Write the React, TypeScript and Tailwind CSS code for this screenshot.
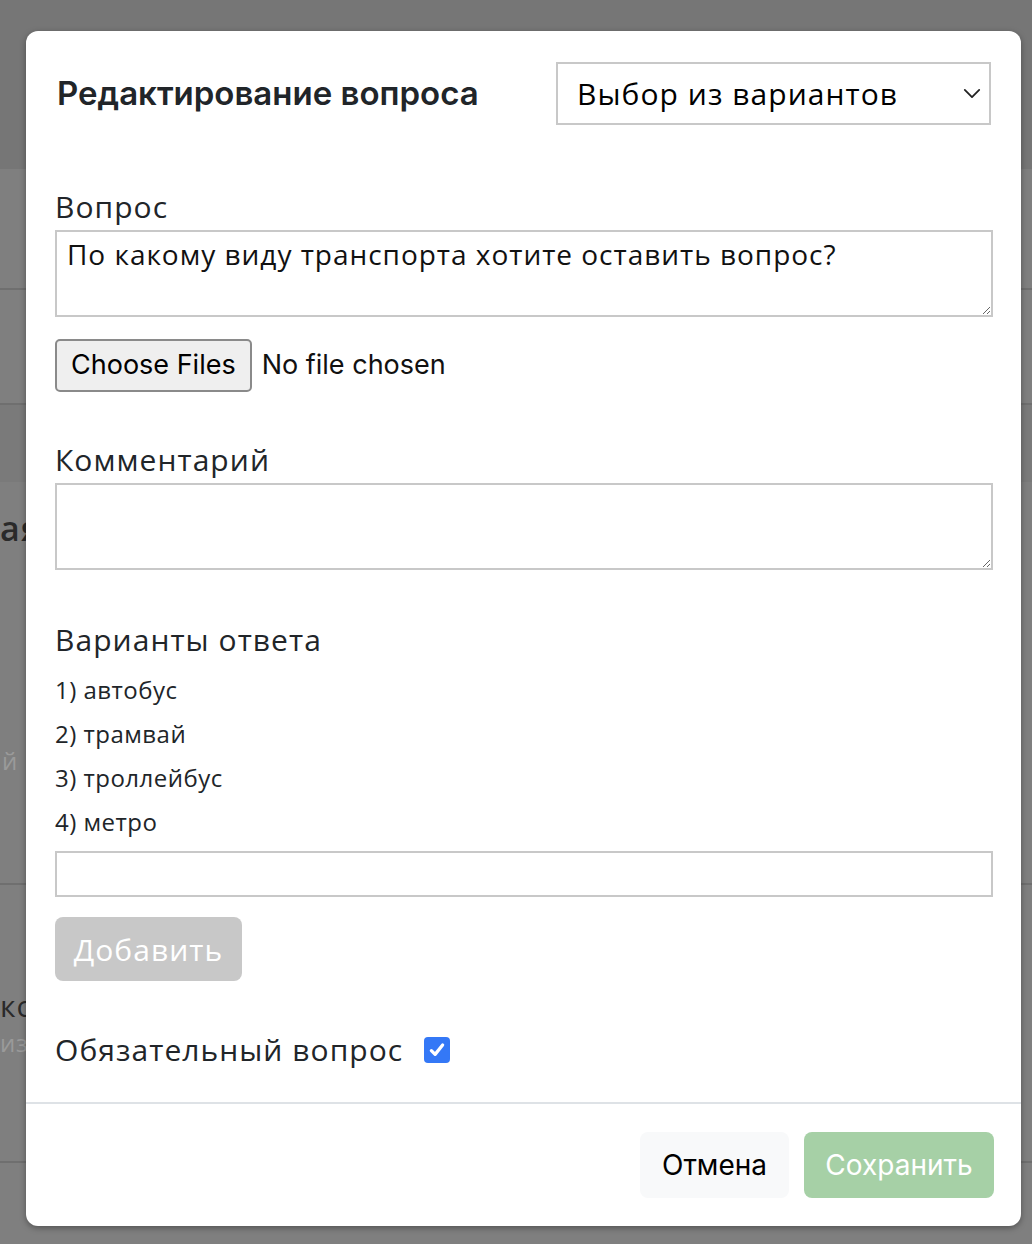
const mont = "font-['Open_Sans',sans-serif] tracking-[0.035em]";
const sys = "font-['Inter',sans-serif]";

function Field({ label, value }: { label: string; value?: string }) {
  return (
    <div className="flex flex-col">
      <label className={`${mont} mb-[10px] text-[30px] leading-[26px] text-[#212529]`}>{label}</label>
      <textarea
        readOnly
        defaultValue={value}
        className={`${mont} h-[87px] w-full border-2 border-[#c8c8c8] px-[10px] py-[4px] text-[28px] leading-[36px] text-[#111] outline-none`}
      />
    </div>
  );
}

function Edge({ children }: { children: React.ReactNode }) {
  return <div className="w-[26px] overflow-hidden whitespace-nowrap">{children}</div>;
}

export default function App() {
  const answers = ["автобус", "трамвай", "троллейбус", "метро"];

  return (
    <div className="relative h-[1244px] w-[1032px] overflow-hidden bg-[#7f7f7f]">
      {/* page under the overlay */}
      <div className="flex flex-col">
        <div className="h-[169px] bg-[#767676]" />
        <div className="h-[121px] border-b-2 border-[#6f6f6f]" />
        <div className="h-[115px] border-b-2 border-[#6f6f6f]" />
        <div className="h-[77px] bg-[#7a7a7a]" />
        <div className="flex h-[403px] flex-col border-b-2 border-[#6f6f6f]">
          <Edge>
            <p className={`${mont} mt-[26px] text-[34px] font-semibold leading-[40px] text-[#2a2a2a]`}>ая</p>
          </Edge>
          <Edge>
            <p className={`${mont} mt-[198px] pl-[2px] text-[24px] leading-[30px] text-[#9a9a9a]`}>й о</p>
          </Edge>
        </div>
        <div className="flex h-[278px] flex-col border-b-2 border-[#6f6f6f]">
          <Edge>
            <p className={`${mont} mt-[103px] text-[30px] leading-[36px] text-[#2a2a2a]`}>ко</p>
          </Edge>
          <Edge>
            <p className={`${mont} mt-[4px] text-[24px] leading-[30px] text-[#9a9a9a]`}>из</p>
          </Edge>
        </div>
      </div>

      {/* modal */}
      <div className="absolute left-[26px] top-[31px] flex h-[1195px] w-[995px] flex-col rounded-[12px] bg-white shadow-[0_2px_6px_rgba(0,0,0,0.35)]">
        <div className="flex items-center justify-between pl-[31px] pr-[30px] pt-[31px]">
          <h2 className={`${sys} text-[33px] font-semibold text-[#212529]`}>Редактирование вопроса</h2>
          <div className="flex h-[63px] w-[435px] items-center justify-between border-2 border-[#c8c8c8] pl-[19px] pr-[8px]">
            <span className={`${mont} text-[30px] text-black`}>Выбор из вариантов</span>
            <svg viewBox="0 0 20 12" className="h-[11px] w-[18px]" fill="none" stroke="#222" strokeWidth={2} strokeLinecap="round" strokeLinejoin="round">
              <path d="M2 2l8 8 8-8" />
            </svg>
          </div>
        </div>

        <div className="flex flex-1 flex-col pl-[29px] pr-[28px] pt-[69px]">
          <Field label="Вопрос" value="По какому виду транспорта хотите оставить вопрос?" />

          <div className="mt-[22px] flex items-center gap-[10px]">
            <button className={`${sys} h-[53px] rounded-[5px] border-2 border-[#8a8a8a] bg-[#efefef] px-[14px] text-[27px] text-black`}>
              Choose Files
            </button>
            <span className={`${sys} text-[27px] text-[#111]`}>No file chosen</span>
          </div>

          <div className="mt-[55px]">
            <Field label="Комментарий" />
          </div>

          <h3 className={`${mont} mt-[52px] text-[30px] leading-[36px] text-[#212529]`}>Варианты ответа</h3>
          <ul className="mt-[10px] flex flex-col">
            {answers.map((a, i) => (
              <li key={a} className="font-['Open_Sans',sans-serif] text-[24px] leading-[44px] tracking-[0.02em] text-[#212529]">
                {i + 1}) {a}
              </li>
            ))}
          </ul>
          <input className="mt-[7px] h-[46px] w-full border-2 border-[#c8c8c8] outline-none" />
          <button className={`${mont} mt-[20px] h-[64px] w-[187px] rounded-[8px] bg-[#c8c8c8] text-[30px] text-white`}>
            Добавить
          </button>

          <div className="mt-[46px] flex items-center gap-[21px]">
            <span className={`${mont} text-[30px] text-[#212529]`}>Обязательный вопрос</span>
            <span className="flex h-[26px] w-[26px] items-center justify-center rounded-[4px] bg-[#3478f6]">
              <svg viewBox="0 0 16 16" className="h-[20px] w-[20px]" fill="none" stroke="white" strokeWidth={2.6} strokeLinecap="round" strokeLinejoin="round">
                <path d="M3.5 8.5l3 3 6-7.5" />
              </svg>
            </span>
          </div>
        </div>

        <div className="flex justify-end gap-[15px] border-t-2 border-[#dee2e6] pb-[28px] pr-[27px] pt-[28px]">
          <button className={`${sys} h-[66px] w-[149px] rounded-[8px] bg-[#f8f9fa] text-[28px] text-black`}>Отмена</button>
          <button className={`${sys} h-[66px] w-[190px] rounded-[8px] bg-[#a6d0a6] text-[28px] text-white`}>Сохранить</button>
        </div>
      </div>
    </div>
  );
}
